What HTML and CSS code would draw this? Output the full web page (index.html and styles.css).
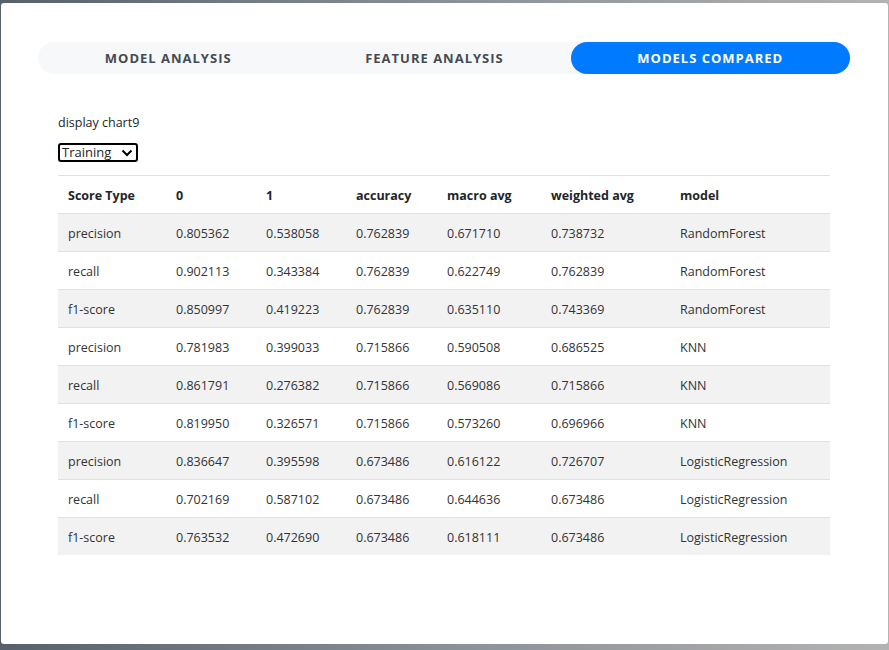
FILE: index.html
```html
<!DOCTYPE html>
<html>
<head>
<meta charset="utf-8">
<link rel="stylesheet" href="styles.css">
</head>
<body>
<div class="panel">
  <div class="tabs">
    <div class="tab">MODEL ANALYSIS</div>
    <div class="tab">FEATURE ANALYSIS</div>
    <div class="tab active">MODELS COMPARED</div>
  </div>
  <div class="content">
    <p class="label">display chart9</p>
    <div class="select">Training <svg width="12" height="8" viewBox="0 0 12 8"><path d="M1.5 1.5 L6 6 L10.5 1.5" fill="none" stroke="#000" stroke-width="2"/></svg></div>
    <table>
      <colgroup>
        <col class="c1"><col class="c2"><col class="c3"><col class="c4"><col class="c5"><col class="c6"><col class="c7">
      </colgroup>
      <thead>
        <tr><th>Score Type</th><th>0</th><th>1</th><th>accuracy</th><th>macro avg</th><th>weighted avg</th><th>model</th></tr>
      </thead>
      <tbody>
        <tr><td>precision</td><td>0.805362</td><td>0.538058</td><td>0.762839</td><td>0.671710</td><td>0.738732</td><td>RandomForest</td></tr>
        <tr><td>recall</td><td>0.902113</td><td>0.343384</td><td>0.762839</td><td>0.622749</td><td>0.762839</td><td>RandomForest</td></tr>
        <tr><td>f1-score</td><td>0.850997</td><td>0.419223</td><td>0.762839</td><td>0.635110</td><td>0.743369</td><td>RandomForest</td></tr>
        <tr><td>precision</td><td>0.781983</td><td>0.399033</td><td>0.715866</td><td>0.590508</td><td>0.686525</td><td>KNN</td></tr>
        <tr><td>recall</td><td>0.861791</td><td>0.276382</td><td>0.715866</td><td>0.569086</td><td>0.715866</td><td>KNN</td></tr>
        <tr><td>f1-score</td><td>0.819950</td><td>0.326571</td><td>0.715866</td><td>0.573260</td><td>0.696966</td><td>KNN</td></tr>
        <tr><td>precision</td><td>0.836647</td><td>0.395598</td><td>0.673486</td><td>0.616122</td><td>0.726707</td><td>LogisticRegression</td></tr>
        <tr><td>recall</td><td>0.702169</td><td>0.587102</td><td>0.673486</td><td>0.644636</td><td>0.673486</td><td>LogisticRegression</td></tr>
        <tr><td>f1-score</td><td>0.763532</td><td>0.472690</td><td>0.673486</td><td>0.618111</td><td>0.673486</td><td>LogisticRegression</td></tr>
      </tbody>
    </table>
  </div>
</div>
</body>
</html>
```

FILE: styles.css
```css
html, body {
  margin: 0;
  padding: 0;
  height: 100%;
}
body {
  background: linear-gradient(90deg, #56616d 0%, #8a9095 50%, #b3b3b3 100%);
  font-family: "Open Sans", "Noto Sans", sans-serif;
  color: #212529;
  padding: 3px 1px 6px 1px;
  box-sizing: border-box;
}
.panel {
  background: #fff;
  height: 641px;
  border-radius: 3px;
  box-sizing: border-box;
  padding: 39px 0 0 37px;
}
.tabs {
  display: flex;
  width: 812px;
  height: 32px;
  background: #f7f8fa;
  border-radius: 16px;
}
.tab {
  flex: 1 1 auto;
  display: flex;
  align-items: center;
  justify-content: center;
  font-size: 13px;
  font-weight: 700;
  letter-spacing: 1px;
  color: #444b52;
  border-radius: 16px;
}
.tab.active {
  background: #007bff;
  color: #fff;
}
.content {
  padding: 0 0 0 20px;
}
.label {
  margin: 40px 0 0;
  font-size: 12.5px;
  line-height: 18px;
}
.select {
  margin-top: 11px;
  width: 74px;
  height: 15px;
  border: 2px solid #000;
  border-radius: 3px;
  font-size: 13px;
  line-height: 15px;
  padding: 0 0 0 2px;
  display: flex;
  align-items: center;
  justify-content: space-between;
  box-sizing: content-box;
}
.select svg {
  margin-right: 3px;
}
table {
  margin-top: 13px;
  border-collapse: collapse;
  width: 772px;
  table-layout: fixed;
  font-size: 12.5px;
}
.c1 { width: 108px; }
.c2 { width: 90px; }
.c3 { width: 90px; }
.c4 { width: 91px; }
.c5 { width: 104px; }
.c6 { width: 129px; }
.c7 { width: 160px; }
th, td {
  text-align: left;
  padding: 1px 10px 0;
  height: 36px;
  border-top: 1px solid #dee2e6;
  white-space: nowrap;
}
th {
  font-weight: 700;
  border-bottom: 1px solid #dee2e6;
}
tbody tr:nth-child(odd) td {
  background: #f2f2f2;
}
tbody td {
  color: #333;
}
```
